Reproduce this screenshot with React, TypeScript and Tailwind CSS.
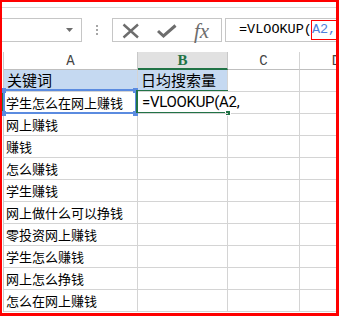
const keywords = [
  '学生怎么在网上赚钱',
  '网上赚钱',
  '赚钱',
  '怎么赚钱',
  '学生赚钱',
  '网上做什么可以挣钱',
  '零投资网上赚钱',
  '学生怎么赚钱',
  '网上怎么挣钱',
  '怎么在网上赚钱',
];

const cjk = "font-['Noto_Sans_CJK_SC','Noto_Sans',sans-serif]";

function FormulaBar() {
  return (
    <div className="flex h-[24px]">
      {/* Name box */}
      <div className="w-[80px] border border-l-0 border-[#c6c6c6] flex items-center justify-end pr-[8px]">
        <svg width="7" height="4" viewBox="0 0 7 4">
          <path d="M0 0 L7 0 L3.5 4 Z" fill="#6d6d6d" />
        </svg>
      </div>

      <div className="w-[30px] flex flex-col items-center justify-center gap-[2px]">
        <div className="w-[2px] h-[2px] bg-[#a6a6a6]" />
        <div className="w-[2px] h-[2px] bg-[#a6a6a6]" />
        <div className="w-[2px] h-[2px] bg-[#a6a6a6]" />
      </div>

      {/* Cancel / enter / fx */}
      <div className="w-[110px] border border-[#c6c6c6] relative">
        <svg className="absolute left-[9px] top-[4px]" width="18" height="16" viewBox="0 0 18 16">
          <path d="M1.5 1.5 L16 14.5 M16 1.5 L1.5 14.5" stroke="#6d6d6d" strokeWidth="2.4" />
        </svg>
        <svg className="absolute left-[44px] top-[5px]" width="20" height="14" viewBox="0 0 20 14">
          <path d="M1 7 L6.5 12 L18.5 1.5" stroke="#6d6d6d" strokeWidth="3" fill="none" />
        </svg>
        <span className="absolute left-[81px] top-[-3px] text-[21px] italic text-[#6d6d6d] font-['Liberation_Serif',serif]">
          fx
        </span>
      </div>

      <div className="w-[3px]" />

      {/* Formula input */}
      <div className="flex-1 border-y border-l border-[#c6c6c6] flex items-center pl-[13px] font-['Liberation_Mono',monospace] text-[13.5px] text-black whitespace-nowrap">
        <span>=VLOOKUP(</span>
        <span className="border border-[#ff0000] h-[20px] flex items-center text-[#4f81dc] -ml-[1px]">A2,</span>
        <span className="w-px h-[17px] bg-black ml-[1px]" />
      </div>
    </div>
  );
}

function HeaderRow() {
  return (
    <div className="flex h-[18px] text-[14px] leading-none">
      <div className="w-[2px] border-r border-[#c8c8c8]" />
      <div className="w-[134px] border-r border-b border-[#c8c8c8] border-b-[#bfbfbf] flex items-center justify-center text-[#444] font-['Liberation_Mono',monospace]">
        A
      </div>
      <div className="w-[90px] bg-[#e1e1e1] border-r border-[#c8c8c8] border-b-2 border-b-[#217346] flex items-center justify-center text-[#217346] font-bold text-[15px] font-['Liberation_Serif',serif]">
        B
      </div>
      <div className="w-[72px] border-r border-b border-[#d4d4d4] border-b-[#bfbfbf] flex items-center justify-center text-[#444] font-['Liberation_Mono',monospace]">
        C
      </div>
      <div className="w-[72px] border-b border-[#bfbfbf] flex items-center justify-center text-[#444] font-['Liberation_Mono',monospace]">
        D
      </div>
    </div>
  );
}

function App() {
  return (
    <div className="w-[339px] h-[316px] overflow-hidden bg-white border-t-2 border-l-2 border-r-[3px] border-b-[3px] border-[#ff0000] relative">
      <div className="w-[400px]">
        <div className="h-[5px]" />
        <div className="h-px bg-[#d5d5d5]" />
        <div className="h-[10px]" />

        <FormulaBar />

        <div className="h-[10px]" />

        <HeaderRow />

        {/* Row 1 */}
        <div className={`flex h-[22px] ${cjk}`}>
          <div className="w-[2px] border-r border-[#c8c8c8]" />
          <div className="w-[134px] bg-[#c5d9f1] border-r border-b border-[#d4d4d4] flex items-center pl-[3px] text-[15px] text-black">
            关键词
          </div>
          <div className="w-[90px] bg-[#c5d9f1] border-r border-b border-[#d4d4d4] flex items-center pl-[3px] text-[15px] text-black">
            日均搜索量
          </div>
          <div className="w-[72px] border-r border-b border-[#d4d4d4]" />
          <div className="w-[72px] border-b border-[#d4d4d4]" />
        </div>

        {keywords.map((k, i) => (
          <div key={k} className={`flex h-[22px] ${cjk}`}>
            <div className={i === 0 ? 'w-[2px] bg-[#217346]' : 'w-[2px] border-r border-[#c8c8c8]'} />
            <div className="w-[134px] border-r border-b border-[#d4d4d4] flex items-center pl-[2px] text-[13px] text-black whitespace-nowrap">
              {k}
            </div>
            {i === 0 ? (
              <div className="w-[90px] border-b border-[#d4d4d4] flex items-center pl-[4px] text-[15px] tracking-[-0.3px] text-black whitespace-nowrap relative z-10 font-['Roboto',sans-serif]">
                =VLOOKUP(A2,
              </div>
            ) : (
              <div className="w-[90px] border-r border-b border-[#d4d4d4]" />
            )}
            <div className="w-[72px] border-r border-b border-[#d4d4d4]" />
            <div className="w-[72px] border-b border-[#d4d4d4]" />
          </div>
        ))}
      </div>

      {/* A2 reference highlight */}
      <div className="absolute left-[1px] top-[87px] w-[134px] h-[25px] border-2 border-[#5b8be0] pointer-events-none" />
      <div className="absolute left-[-1px] top-[86px] w-[5px] h-[5px] bg-[#5b8be0]" />
      <div className="absolute left-[131px] top-[86px] w-[5px] h-[5px] bg-[#5b8be0]" />
      <div className="absolute left-[-1px] top-[109px] w-[5px] h-[5px] bg-[#5b8be0]" />
      <div className="absolute left-[131px] top-[109px] w-[5px] h-[5px] bg-[#5b8be0]" />

      {/* B2 active cell */}
      <div className="absolute left-[134px] top-[88px] w-[2px] h-[23px] bg-[#217346]" />
      <div className="absolute left-[136px] top-[88px] w-[90px] h-[1px] bg-[#217346]" />
      <div className="absolute left-[136px] top-[110px] w-[90px] h-[2px] bg-[#217346]" />
      <div className="absolute left-[223px] top-[108px] w-[6px] h-[6px] bg-[#217346] border border-white" />
    </div>
  );
}

export default App;
